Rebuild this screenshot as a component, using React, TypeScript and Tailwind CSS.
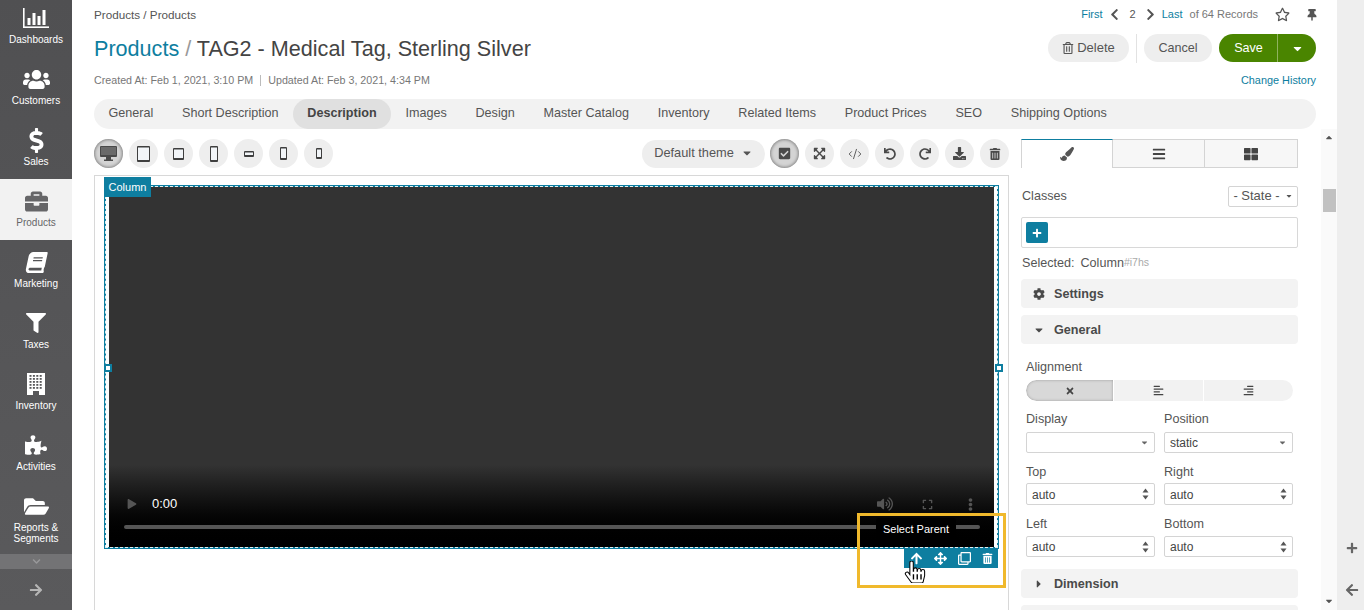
import React from 'react';
import {
  FaUsers, FaDollarSign, FaBriefcase, FaBook, FaFilter, FaPuzzlePiece, FaFolderOpen, FaArrowRight, FaArrowLeft,
  FaChevronDown, FaChevronLeft, FaChevronRight, FaRegStar, FaThumbtack, FaRegTrashAlt, FaCaretDown, FaCaretRight,
  FaCheckSquare, FaExpandArrowsAlt, FaUndo, FaRedo, FaDownload, FaTrashAlt, FaPaintBrush, FaBars, FaThLarge, FaPlus, FaCog,
  FaTimes, FaAlignLeft, FaAlignRight, FaArrowUp, FaArrowsAlt, FaRegClone, FaVolumeUp, FaExpand, FaEllipsisV, FaHandPointer, FaPlay,
} from 'react-icons/fa';
import { CodeXml } from 'lucide-react';

const ChartIcon = () => (
  <svg width="26" height="20" viewBox="0 0 26 20" fill="white">
    <rect x="0" y="0" width="1.6" height="20" />
    <rect x="0" y="18.4" width="26" height="1.6" />
    <rect x="4.5" y="10" width="3" height="7" />
    <rect x="9.5" y="5" width="3" height="12" />
    <rect x="14.5" y="8" width="3" height="9" />
    <rect x="19.5" y="2" width="3" height="15" />
  </svg>
);

const BuildingIcon = () => {
  const cells: React.ReactNode[] = [];
  for (let r = 0; r < 5; r++) {
    for (let c = 0; c < 4; c++) {
      cells.push(<rect key={`${r}-${c}`} x={2.5 + c * 3.4} y={2 + r * 3} width="2" height="1.8" fill="#58585a" />);
    }
  }
  return (
    <svg width="18" height="22" viewBox="0 0 18 22">
      <rect width="18" height="22" fill="white" />
      {cells}
      <rect x="6" y="18" width="6" height="4" fill="#58585a" />
    </svg>
  );
};

const Nav = ({ icon, label, active, tall }: { icon: React.ReactNode; label: React.ReactNode; active?: boolean; tall?: boolean }) => (
  <div className={`flex flex-col items-center pt-[10px] shrink-0 ${tall ? 'h-[70px]' : 'h-[61px]'} ${active ? 'bg-[#f2f2f2] text-[#666668]' : 'text-white'}`}>
    <div className="h-[24px] flex items-center justify-center">{icon}</div>
    <div className="mt-[4px] text-[10px] leading-[11px] text-center">{label}</div>
  </div>
);

const Device = ({ w, h }: { w: number; h: number }) => (
  <svg width={w} height={h} viewBox={`0 0 ${w} ${h}`}>
    <rect x="0" y="0" width={w} height={h} rx="1" fill="#3f3f3f" />
    <rect x="1" y="1.5" width={w - 2} height={h - 3.5} fill="#f2f5f8" />
  </svg>
);

const Desktop = () => (
  <svg width="17" height="15" viewBox="0 0 17 15">
    <rect x="0" y="0" width="17" height="11" rx="1" fill="#4a4a4a" />
    <rect x="1" y="1" width="15" height="8" fill="#6a6a6a" />
    <rect x="6" y="11" width="5" height="3" fill="#4a4a4a" />
    <rect x="4" y="13.5" width="9" height="1.5" fill="#4a4a4a" />
  </svg>
);

const Circle = ({ children, active }: { children?: React.ReactNode; active?: boolean }) => (
  <div className={`w-[29px] h-[29px] rounded-full flex items-center justify-center shrink-0 text-[#4a4a4a] ${active ? 'bg-[#d4d4d4] shadow-[inset_0_0_3px_1px_#888]' : 'bg-[#eeeeee]'}`}>
    {children}
  </div>
);

const Spin = () => (
  <svg width="7" height="12" viewBox="0 0 7 12" fill="#555">
    <path d="M3.5 0.5 L6.5 4.5 H0.5 Z" />
    <path d="M3.5 11.5 L6.5 7.5 H0.5 Z" />
  </svg>
);

const Field = ({ label, value, select, tight, low }: { label: string; value: string; select?: boolean; tight?: boolean; low?: boolean }) => (
  <div className="w-[129px]">
    <div className={`h-[16px] text-[12.6px] leading-[16px] text-[#555] ${low ? 'pt-[2px]' : 'pt-[1px]'}`}>{label}</div>
    <div className={`${tight ? 'mt-[6px] h-[21px]' : 'mt-[5px] h-[22px]'} border border-[#d4d4d4] rounded-[2px] bg-white flex items-center justify-between pl-[5px] pr-[5px] text-[12px] text-[#444]`}>
      <span className={tight ? '' : 'pt-px'}>{value}</span>
      {select ? <FaCaretDown size={9} className="text-[#666]" /> : <Spin />}
    </div>
  </div>
);

const Section = ({ icon, label }: { icon: React.ReactNode; label: string }) => (
  <div className="h-[29px] rounded-[4px] bg-[#f3f3f3] flex items-center pl-[12px] text-[12.6px] font-bold text-[#4a4a4a]">
    <span className="w-[21px] flex items-center">{icon}</span>
    <span className="pt-px">{label}</span>
  </div>
);

const tabs = ['General', 'Short Description', 'Description', 'Images', 'Design', 'Master Catalog', 'Inventory', 'Related Items', 'Product Prices', 'SEO', 'Shipping Options'];

export default function App() {
  return (
    <div className="relative flex w-[1364px] h-[610px] overflow-hidden bg-white font-['Liberation_Sans',Arial,sans-serif]">
      <aside className="w-[72px] shrink-0 h-full flex flex-col bg-gradient-to-b from-[#505052] to-[#5a5a5c] overflow-hidden">
        <div className="-mt-[4px] flex flex-col">
          <Nav icon={<ChartIcon />} label="Dashboards" />
          <Nav icon={<FaUsers size={27} />} label="Customers" />
          <Nav icon={<FaDollarSign size={25} />} label="Sales" />
          <Nav active icon={<FaBriefcase size={23} />} label="Products" />
          <Nav icon={<FaBook size={21} className="-skew-x-12" />} label="Marketing" />
          <Nav icon={<FaFilter size={20} />} label="Taxes" />
          <Nav icon={<BuildingIcon />} label="Inventory" />
          <Nav icon={<FaPuzzlePiece size={22} />} label="Activities" />
          <Nav tall icon={<FaFolderOpen size={25} />} label={<>Reports &<br />Segments</>} />
        </div>
        <div className="h-[15px] shrink-0 bg-[#737375] flex items-center justify-center text-[#98989a]"><FaChevronDown size={9} /></div>
        <div className="flex-1 flex items-center justify-center text-[#b5b5b5]"><FaArrowRight size={14} /></div>
      </aside>

      <main className="w-[1265px] shrink-0 flex flex-col">
        <header className="h-[129px] shrink-0 pl-[22px] pr-[21px] flex flex-col">
          <div className="h-[29px] flex items-center justify-between">
            <div className="text-[11.7px] text-[#555]">Products / Products</div>
            <div className="flex items-center text-[11px] text-[#0e7ea0] -mr-[2px]">
              <span>First</span>
              <FaChevronLeft size={13} className="ml-[5px] text-[#555]" />
              <span className="ml-[9px] text-[#555]">2</span>
              <FaChevronRight size={13} className="ml-[8px] text-[#555]" />
              <span className="ml-[5px]">Last</span>
              <span className="ml-[7px] text-[#777]">of 64 Records</span>
              <FaRegStar size={15} className="ml-[17px] text-[#555]" />
              <FaThumbtack size={12} className="ml-[16px] text-[#555]" />
            </div>
          </div>
          <div className="h-[38px] flex items-center justify-between">
            <div className="text-[21.6px] leading-[28px] text-[#444] pt-[2px]">
              <span className="text-[#0e7ea0]">Products</span>
              <span className="text-[#999]"> / </span>
              TAG2 - Medical Tag, Sterling Silver
            </div>
            <div className="flex items-center">
              <div className="h-[28px] w-[81px] rounded-full bg-[#eeeeee] flex items-center justify-center gap-[3px] text-[13px] text-[#555]"><FaRegTrashAlt size={12} />Delete</div>
              <div className="w-px h-[29px] bg-[#e2e2e2] ml-[7px] mr-[7px]" />
              <div className="h-[28px] w-[68px] rounded-full bg-[#eeeeee] flex items-center justify-center text-[12.6px] text-[#555]">Cancel</div>
              <div className="ml-[7px] h-[28px] w-[97px] rounded-full bg-[#4a8500] flex items-center text-white text-[12.6px]">
                <span className="w-[58px] text-center pl-[1px]">Save</span>
                <span className="w-px h-full bg-[#8fb35f]" />
                <span className="flex-1 flex justify-center"><FaCaretDown size={13} /></span>
              </div>
            </div>
          </div>
          <div className="h-[27px] flex items-center justify-between">
            <div className="text-[#777] text-[10.7px] flex items-center">
              <span>Created At: Feb 1, 2021, 3:10 PM</span>
              <span className="w-px h-[11px] bg-[#bbb] mx-[7px]" />
              <span>Updated At: Feb 3, 2021, 4:34 PM</span>
            </div>
            <div className="text-[#0e7ea0] text-[10.9px]">Change History</div>
          </div>
          <nav className="h-[30px] mt-[5px] rounded-full bg-[#f2f2f2] flex items-center text-[12.6px] text-[#555]">
            {tabs.map(t => (
              <div key={t} className={`h-full flex items-center px-[14.4px] pb-[2px] ${t === 'Description' ? 'bg-[#e0e0e0] rounded-full font-bold text-[#444]' : ''}`}>{t}</div>
            ))}
          </nav>
        </header>

        <div className="flex-1 min-h-0 flex pl-[22px] pt-[10px] overflow-hidden">
          <section className="w-[915px] shrink-0 flex flex-col">
            <div className="h-[29px] shrink-0 flex items-center gap-[6px]">
              <Circle active><Desktop /></Circle>
              <Circle><Device w={13} h={16} /></Circle>
              <Circle><Device w={11} h={12} /></Circle>
              <Circle><Device w={8} h={16} /></Circle>
              <Circle><Device w={10} h={6} /></Circle>
              <Circle><Device w={7} h={13} /></Circle>
              <Circle><Device w={6} h={11} /></Circle>
              <div className="flex-1" />
              <div className="h-[28px] w-[123px] rounded-full bg-[#eeeeee] flex items-center justify-center gap-[7px] pb-px text-[12.8px] text-[#555] -mr-px">Default theme <FaCaretDown size={12} /></div>
              <Circle active><FaCheckSquare size={13} /></Circle>
              <Circle><FaExpandArrowsAlt size={13} /></Circle>
              <Circle><CodeXml size={14} strokeWidth={1.5} /></Circle>
              <Circle><FaUndo size={12} /></Circle>
              <Circle><FaRedo size={12} /></Circle>
              <Circle><FaDownload size={13} /></Circle>
              <Circle><FaTrashAlt size={12} /></Circle>
            </div>
            <div className="mt-[7px] flex-1 border border-b-0 border-[#d8d8d8] pl-[9px] pr-[9px] pt-[9px]">
              <div className="h-[364px] border-2 border-[#0e7ea0]">
                <div className="-m-px h-[calc(100%+2px)] border border-dashed border-[#e4eef0] pl-[3px] pr-[3px]">
                  <div className="w-full h-full bg-[#333333] flex flex-col justify-end">
                    <div className="h-[82px] bg-gradient-to-b from-[#333333] to-black flex flex-col justify-end px-[15px] pb-[18px]">
                      <div className="flex items-center pl-[3px] pr-[2px] h-[20px] mb-[11px]">
                        <FaPlay size={10} className="text-[#555]" />
                        <span className="ml-[15px] text-[13px] text-white">0:00</span>
                        <div className="flex-1" />
                        <FaVolumeUp size={16} className="text-[#555] mr-[29px]" />
                        <FaExpand size={11} className="text-[#555] mr-[31px]" />
                        <FaEllipsisV size={13} className="text-[#555]" />
                      </div>
                      <div className="h-[4px] rounded-full bg-[#555] w-[856px]" />
                    </div>
                  </div>
                </div>
              </div>
            </div>
          </section>

          <section className="w-[277px] ml-[12px] shrink-0 self-start flex flex-col">
            <div className="h-[29px] flex border-b border-[#d4d4d4]">
              <div className="w-[92px] border-t border-t-[#0e7ea0] border-l border-r border-[#d4d4d4] bg-white flex items-center justify-center text-[#555] -mb-px"><FaPaintBrush size={14} /></div>
              <div className="w-[92px] border-t border-r border-[#d4d4d4] bg-[#f7f7f7] flex items-center justify-center text-[#444]"><FaBars size={14} /></div>
              <div className="w-[93px] border-t border-r border-[#d4d4d4] bg-[#f7f7f7] flex items-center justify-center text-[#444]"><FaThLarge size={14} /></div>
            </div>
            <div className="mt-[17px] h-[22px] flex items-center justify-between pl-[1px]">
              <span className="text-[12.6px] text-[#555]">Classes</span>
              <div className="w-[70px] h-[21px] border border-[#d4d4d4] rounded-[2px] flex items-center justify-center gap-[5px] text-[13px] text-[#555]">- State - <FaCaretDown size={8} /></div>
            </div>
            <div className="mt-[10px] h-[31px] border border-[#d8d8d8] rounded-[2px] flex items-center pl-[4px]">
              <div className="w-[22px] h-[21px] rounded-[2px] bg-[#0e7ea0] flex items-center justify-center text-white"><FaPlus size={10} /></div>
            </div>
            <div className="mt-[7px] h-[16px] flex items-center pl-[1px] text-[12.6px] text-[#555]">
              <span>Selected:</span><span className="ml-[6px]">Column</span><span className="text-[10.5px] text-[#aaa]">#i7hs</span>
            </div>
            <div className="mt-[8px]"><Section icon={<FaCog size={12} />} label="Settings" /></div>
            <div className="mt-[7px]"><Section icon={<FaCaretDown size={12} />} label="General" /></div>
            <div className="px-[5px]">
              <div className="mt-[14px] h-[16px] pt-[1px] text-[12.6px] leading-[16px] text-[#555]">Alignment</div>
              <div className="mt-[6px] h-[21px] flex rounded-full overflow-hidden text-[#444] gap-px">
                <div className="w-[87px] bg-[#d8d8d8] rounded-l-full shadow-[inset_0_0_3px_#999] flex items-center justify-center"><FaTimes size={10} /></div>
                <div className="w-[89px] flex items-center justify-center bg-[#f2f2f2]"><FaAlignLeft size={11} /></div>
                <div className="flex-1 flex items-center justify-center bg-[#f2f2f2]"><FaAlignRight size={11} /></div>
              </div>
              <div className="mt-[9px] flex justify-between"><Field tight label="Display" value="" select /><Field tight label="Position" value="static" select /></div>
              <div className="mt-[9px] flex justify-between"><Field low label="Top" value="auto" /><Field low label="Right" value="auto" /></div>
              <div className="mt-[9px] flex justify-between"><Field low tight label="Left" value="auto" /><Field low tight label="Bottom" value="auto" /></div>
            </div>
            <div className="mt-[12px]"><Section icon={<FaCaretRight size={12} />} label="Dimension" /></div>
            <div className="mt-[7px]"><Section icon={null} label="" /></div>
          </section>

          <div className="ml-[23px] w-[16px] shrink-0 flex flex-col items-center relative bg-[#fafafa] -mt-[10px]">
            <FaCaretDown size={10} className="rotate-180 mt-[4px] text-[#555]" />
            <div className="mt-[46px] w-[13px] h-[23px] bg-[#c1c1c1]" />
            <div className="flex-1" />
            <FaCaretDown size={10} className="mb-[4px] text-[#555]" />
          </div>
        </div>
      </main>

      <div className="flex-1 bg-[#eeeeee] flex flex-col items-center justify-end pb-[13px] pl-[3px] text-[#666]">
        <FaPlus size={12} className="mb-[29px]" />
        <FaArrowLeft size={14} />
      </div>

      <div className="absolute left-[104px] top-[177px] w-[47px] h-[20px] bg-[#0e7ea0] text-white text-[11px] flex items-center justify-center">Column</div>
      <div className="absolute left-[104px] top-[364px] w-[8px] h-[8px] bg-white border-2 border-[#0e7ea0]" />
      <div className="absolute left-[995px] top-[364px] w-[8px] h-[8px] bg-white border-2 border-[#0e7ea0]" />
      <div className="absolute left-[876px] top-[518px] w-[80px] h-[23px] bg-black rounded-[3px] text-white text-[11px] flex items-center justify-center">Select Parent</div>
      <div className="absolute left-[904px] top-[548px] w-[94px] h-[20px] bg-[#0e7ea0] text-white flex items-center pl-[6px] gap-[11px]">
        <FaArrowUp size={13} /><FaArrowsAlt size={13} /><FaRegClone size={13} /><FaTrashAlt size={11} />
      </div>
      <div className="absolute left-[904px] top-[561px]"><FaHandPointer size={22} fill="white" stroke="black" strokeWidth={24} /></div>
      <div className="absolute left-[857px] top-[513px] w-[149px] h-[75px] border-[3px] border-[#f0b92c]" />
    </div>
  );
}
